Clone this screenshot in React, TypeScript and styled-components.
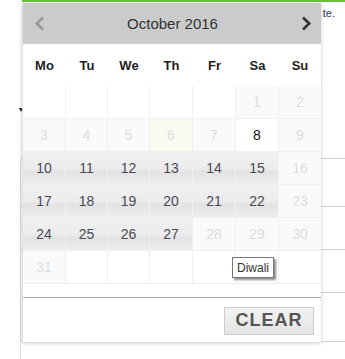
import React from "react";
import styled, { createGlobalStyle } from "styled-components";

const Global = createGlobalStyle`
  html, body {
    margin: 0;
    padding: 0;
    background: #fff;
    font-family: "Liberation Sans", Arial, sans-serif;
  }
`;

const Page = styled.div`
  position: relative;
  width: 345px;
  height: 359px;
  overflow: hidden;
`;

const TopField = styled.div`
  margin-left: 22px;
  height: 2px;
  background: #6cc03c;
`;

const Note = styled.div`
  display: flex;
  justify-content: flex-end;
  padding-right: 10px;
  margin-top: 5px;
  font-size: 11px;
  color: #33305a;
  height: 14px;
`;

const Marker = styled.div`
  margin: 87px 0 0 19px;
  width: 0;
  height: 0;
  border-left: 2px solid transparent;
  border-right: 2px solid transparent;
  border-top: 4px solid #222;
`;

const Rows = styled.div`
  margin: 46px 0 0 20px;
  border-left: 1px solid #ddd;
  border-top-left-radius: 3px;
  display: flex;
  flex-direction: column;
`;

const Row = styled.div<{ $h: number }>`
  height: ${p => p.$h}px;
  border-top: 1px solid #d0d0d0;
`;

const Picker = styled.div`
  position: absolute;
  left: 22px;
  top: 3px;
  width: 299px;
  background: #fff;
  box-shadow: 0 1px 4px rgba(0, 0, 0, 0.22);
  border-left: 1px solid #e0e0e0;
  box-sizing: border-box;
`;

const Header = styled.div`
  height: 41px;
  background: #cbcbcb;
  display: flex;
  align-items: center;
  justify-content: space-between;
  padding: 0 8px 0 9px;
`;

const Title = styled.div`
  font-size: 15px;
  color: #333;
`;

const Nav = styled.button<{ $dim?: boolean }>`
  border: none;
  background: none;
  padding: 0;
  width: 14px;
  height: 18px;
  display: flex;
  align-items: center;
  justify-content: center;
  color: ${p => (p.$dim ? "#999" : "#333")};
`;

const Grid = styled.div`
  display: grid;
  grid-template-columns: 43px 42px 42px 43px 43px 43px 42px;
`;

const DayName = styled.div`
  height: 42px;
  display: flex;
  align-items: center;
  justify-content: center;
  font-size: 13px;
  font-weight: bold;
  color: #241c1c;
`;

type Kind = "empty" | "off" | "today" | "free" | "range";

const Cell = styled.div<{ $kind: Kind }>`
  height: 33px;
  box-sizing: border-box;
  border-right: 1px solid #f0f0f0;
  border-bottom: 1px solid #f0f0f0;
  display: flex;
  align-items: center;
  justify-content: center;
  font-size: 14px;
  color: ${p =>
    p.$kind === "range" ? "#4a4a55" : p.$kind === "free" ? "#111" : "#ddd"};
  background: ${p =>
    p.$kind === "range"
      ? "linear-gradient(#f1f1f1 0%, #ececec 50%, #e3e3e3 62%, #ededed 100%)"
      : p.$kind === "today"
      ? "#fbfbf1"
      : p.$kind === "off"
      ? "#fafafa"
      : "#fff"};
  &:nth-child(7n) {
    border-right: none;
  }
`;

const Spacer = styled.div`
  height: 13px;
`;

const Footer = styled.div`
  border-top: 1px solid #aaa;
  height: 44px;
  display: flex;
  align-items: center;
  justify-content: flex-end;
  padding-right: 7px;
`;

const ClearButton = styled.button`
  width: 90px;
  height: 28px;
  border: 1px solid #ccc;
  background: linear-gradient(#f2f2f2, #e4e4e4);
  font-family: "Liberation Sans", Arial, sans-serif;
  font-weight: bold;
  font-size: 18px;
  letter-spacing: 1px;
  color: #555;
  padding: 0;
  margin-top: 1px;
`;

const Tip = styled.div`
  position: absolute;
  left: 232px;
  top: 257px;
  height: 19px;
  padding: 0 4px;
  border: 1px solid #777;
  background: #fff;
  font-size: 12px;
  color: #333;
  display: flex;
  align-items: center;
  box-shadow: 2px 2px 2px rgba(0, 0, 0, 0.45);
`;

const Chevron = ({ left }: { left?: boolean }) => (
  <svg width="11" height="15" viewBox="0 0 11 15">
    <path
      d={left ? "M9 1.5L2.8 7.5L9 13.5" : "M2 1.5L8.2 7.5L2 13.5"}
      fill="none"
      stroke="currentColor"
      strokeWidth="2.6"
    />
  </svg>
);

const days = ["Mo", "Tu", "We", "Th", "Fr", "Sa", "Su"];

const kindOf = (d: number): Kind => {
  if (d === 6) return "today";
  if (d === 8) return "free";
  if ((d >= 10 && d <= 15) || (d >= 17 && d <= 22) || (d >= 24 && d <= 27))
    return "range";
  return "off";
};

const cells: { d: number | null; kind: Kind }[] = [];
for (let i = 0; i < 5; i++) cells.push({ d: null, kind: "empty" });
for (let d = 1; d <= 31; d++) cells.push({ d, kind: kindOf(d) });
while (cells.length < 42) cells.push({ d: null, kind: "empty" });

const App = () => {
  return (
    <Page>
      <Global />
      <TopField />
      <Note>te.</Note>
      <Marker />
      <Rows>
        <Row $h={47} />
        <Row $h={42} />
        <Row $h={42} />
        <Row $h={48} />
        <Row $h={40} />
      </Rows>
      <Picker>
        <Header>
          <Nav $dim>
            <Chevron left />
          </Nav>
          <Title>October 2016</Title>
          <Nav>
            <Chevron />
          </Nav>
        </Header>
        <Grid>
          {days.map(d => (
            <DayName key={d}>{d}</DayName>
          ))}
        </Grid>
        <Grid>
          {cells.map((c, i) => (
            <Cell key={i} $kind={c.kind}>
              {c.d}
            </Cell>
          ))}
        </Grid>
        <Spacer />
        <Footer>
          <ClearButton>CLEAR</ClearButton>
        </Footer>
      </Picker>
      <Tip>Diwali</Tip>
    </Page>
  );
};

export default App;
